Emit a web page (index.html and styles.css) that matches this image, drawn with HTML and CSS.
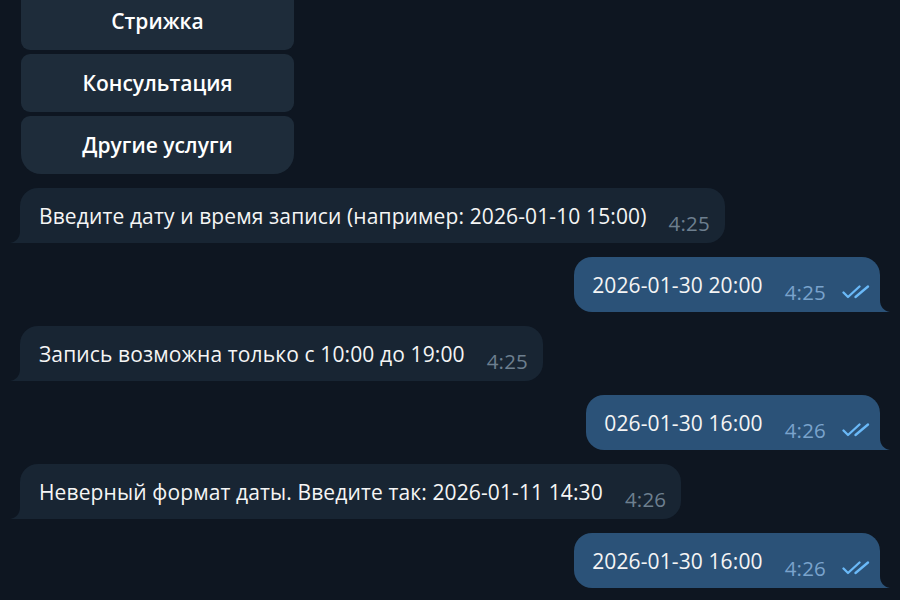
FILE: index.html
```html
<!DOCTYPE html>
<html lang="ru">
<head>
<meta charset="utf-8">
<title>Chat</title>
<link rel="stylesheet" href="styles.css">
</head>
<body>
<div class="chat">
  <div class="keyboard">
    <div class="kb-btn">Стрижка</div>
    <div class="kb-btn">Консультация</div>
    <div class="kb-btn kb-last">Другие услуги</div>
  </div>
  <div class="messages">
    <div class="row in">
      <div class="bubble"><span class="text">Введите дату и время записи (например: 2026-01-10 15:00)</span><span class="meta"><span class="time">4:25</span></span><svg class="tail" viewBox="0 0 10 12"><path d="M10 0 C10 7 6 11 0 12 L10 12 Z"/></svg></div>
    </div>
    <div class="row out">
      <div class="bubble"><span class="text">2026-01-30 20:00</span><span class="meta"><span class="time">4:25</span><svg class="checks" viewBox="0 0 28 14"><path d="M1.5 7.5 L6 12 L17.5 1.5 M13.5 12 L26 1.5" /></svg></span><svg class="tail" viewBox="0 0 10 12"><path d="M0 0 C0 7 4 11 10 12 L0 12 Z"/></svg></div>
    </div>
    <div class="row in">
      <div class="bubble"><span class="text">Запись возможна только с 10:00 до 19:00</span><span class="meta"><span class="time">4:25</span></span><svg class="tail" viewBox="0 0 10 12"><path d="M10 0 C10 7 6 11 0 12 L10 12 Z"/></svg></div>
    </div>
    <div class="row out">
      <div class="bubble"><span class="text">026-01-30 16:00</span><span class="meta"><span class="time">4:26</span><svg class="checks" viewBox="0 0 28 14"><path d="M1.5 7.5 L6 12 L17.5 1.5 M13.5 12 L26 1.5" /></svg></span><svg class="tail" viewBox="0 0 10 12"><path d="M0 0 C0 7 4 11 10 12 L0 12 Z"/></svg></div>
    </div>
    <div class="row in">
      <div class="bubble"><span class="text">Неверный формат даты. Введите так: 2026-01-11 14:30</span><span class="meta"><span class="time">4:26</span></span><svg class="tail" viewBox="0 0 10 12"><path d="M10 0 C10 7 6 11 0 12 L10 12 Z"/></svg></div>
    </div>
    <div class="row out">
      <div class="bubble"><span class="text">2026-01-30 16:00</span><span class="meta"><span class="time">4:26</span><svg class="checks" viewBox="0 0 28 14"><path d="M1.5 7.5 L6 12 L17.5 1.5 M13.5 12 L26 1.5" /></svg></span><svg class="tail" viewBox="0 0 10 12"><path d="M0 0 C0 7 4 11 10 12 L0 12 Z"/></svg></div>
    </div>
  </div>
</div>
</body>
</html>
```

FILE: styles.css
```css
html, body {
  margin: 0;
  padding: 0;
  height: 100%;
  overflow: hidden;
}
body {
  background: #0e1621;
  font-family: "Open Sans", "Noto Sans", sans-serif;
  color: #f5f5f5;
}
.chat {
  display: flex;
  flex-direction: column;
  padding: 0 20px 0 20px;
}
.keyboard {
  display: flex;
  flex-direction: column;
  gap: 4px;
  width: 273px;
  margin-top: -8px;
  margin-left: 1px;
}
.kb-btn {
  height: 58px;
  background: #1e2c3a;
  border-radius: 9px;
  display: flex;
  align-items: center;
  justify-content: center;
  font-weight: 600;
  font-size: 21px;
  color: #ffffff;
}
.kb-last {
  border-radius: 9px 9px 20px 20px;
}
.messages {
  display: flex;
  flex-direction: column;
  gap: 14px;
  margin-top: 14px;
}
.row {
  display: flex;
}
.row.out {
  justify-content: flex-end;
}
.bubble {
  position: relative;
  display: flex;
  align-items: flex-end;
  height: 55px;
  box-sizing: border-box;
  padding: 0 15px 0 19px;
  font-size: 21px;
}
.in .bubble {
  background: #182533;
  border-radius: 18px 18px 18px 0;
}
.out .bubble {
  background: #2b5278;
  border-radius: 18px 18px 0 18px;
  padding-left: 18px;
  padding-right: 10px;
}
.text {
  line-height: 28px;
  padding-bottom: 13px;
  white-space: nowrap;
  letter-spacing: 0.12px;
}
.meta {
  display: flex;
  align-items: center;
  margin-left: 22px;
  padding-bottom: 9px;
  gap: 16px;
}
.time {
  font-size: 20.5px;
  line-height: 22px;
  letter-spacing: 0.2px;
}
.in .time {
  color: #6d7f8f;
}
.out .time {
  color: #7aa3cc;
}
.checks {
  width: 28px;
  height: 14px;
  fill: none;
  stroke: #6ab9f8;
  stroke-width: 2.3;
  stroke-linecap: round;
  stroke-linejoin: round;
}
.tail {
  position: absolute;
  bottom: 0;
  width: 10px;
  height: 12px;
}
.in .tail {
  left: -10px;
  fill: #182533;
}
.out .tail {
  right: -10px;
  fill: #2b5278;
}
```
